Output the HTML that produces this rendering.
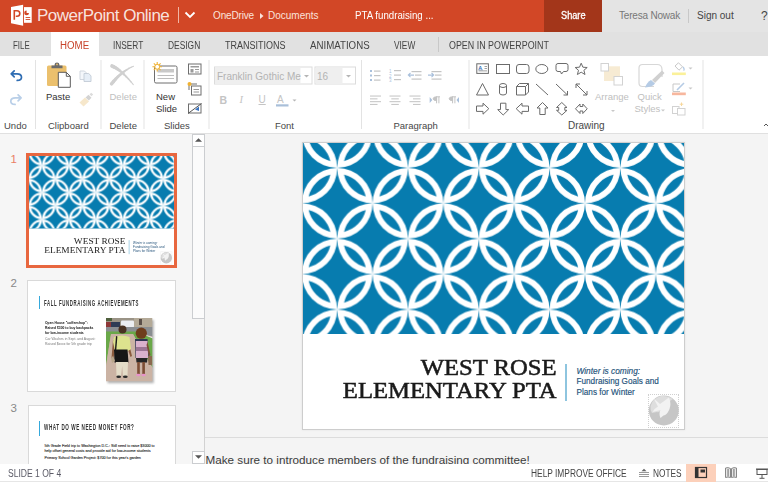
<!DOCTYPE html>
<html><head><meta charset="utf-8">
<style>
*{margin:0;padding:0;box-sizing:border-box}
html,body{width:768px;height:482px;overflow:hidden;background:#fff;font-family:"Liberation Sans",sans-serif}
div,span,svg{position:absolute}
.t{white-space:nowrap;line-height:1;transform-origin:0 0}
.tab{top:41px;font-size:10px;color:#444}
.sep{top:60px;width:1px;height:69px;background:#e3e3e3}
.lbl{top:121px;font-size:9.5px;color:#474747}
.big{font-size:9.5px;color:#444}
#th1 div{-webkit-text-stroke-width:0 !important}
</style></head><body>
<!-- title bar -->
<div style="left:0;top:0;width:768px;height:32px;background:#e4e4e4"></div>
<div style="left:0;top:0;width:544px;height:32px;background:#d24726"></div>
<div style="left:544px;top:0;width:58px;height:32px;background:#a3361a"></div>
<svg style="left:0;top:0" width="40" height="32" viewBox="0 0 40 32">
 <polygon points="11,7.1 23.1,4.7 23.1,25.7 11,23.3" fill="#fff"/>
 <path d="M14.3,19.8 V10.8 H17 Q19.8,10.8 19.8,13.6 Q19.8,16.3 17,16.3 H15.8" fill="none" stroke="#d24726" stroke-width="1.6"/>
 <rect x="24" y="7.1" width="7.7" height="15.7" fill="#fff"/>
 <path d="M26.6,10.5 A2.4,2.4 0 1 0 29,12.9 H26.6Z" fill="#d24726"/>
 <rect x="25.6" y="17" width="4.6" height="0.9" fill="#d24726"/>
 <rect x="25.6" y="19" width="4.6" height="0.9" fill="#d24726"/>
</svg>
<div class="t" style="left:37px;top:7px;font-size:17px;color:rgba(255,255,255,0.86);letter-spacing:-0.5px">PowerPoint Online</div>
<div style="left:178px;top:7px;width:1px;height:16px;background:#f0b6a6"></div>
<svg style="left:184px;top:11px" width="12" height="8" viewBox="0 0 12 8"><path d="M1.5,1.5 L6,6 L10.5,1.5" fill="none" stroke="#fff" stroke-width="1.8"/></svg>
<div class="t" style="left:213px;top:11px;font-size:10px;color:#fbe3dc;letter-spacing:-0.15px">OneDrive</div>
<svg style="left:259px;top:12px" width="6" height="8"><path d="M1,1 L4.5,4 L1,7Z" fill="#fbe3dc"/></svg>
<div class="t" style="left:268px;top:11px;font-size:10px;color:#fbe3dc">Documents</div>
<div class="t" style="left:355px;top:11px;font-size:10px;color:#fff;transform:scaleX(0.97)">PTA fundraising ...</div>
<div class="t" style="left:561px;top:11px;font-size:10px;color:#fff;-webkit-text-stroke:0.3px #fff;transform:scaleX(0.92)">Share</div>
<div class="t" style="left:619px;top:11px;font-size:10px;color:#777;letter-spacing:-0.2px">Teresa Nowak</div>
<div style="left:688px;top:9px;width:1px;height:14px;background:#c8c8c8"></div>
<div class="t" style="left:697px;top:11px;font-size:10px;color:#444">Sign out</div>
<div class="t" style="left:761px;top:10px;font-size:12px;color:#444">?</div>

<!-- tabs -->
<div style="left:0;top:32px;width:768px;height:24px;background:#e1e1e1"></div>
<div style="left:51px;top:32px;width:48px;height:24px;background:#fff"></div>
<div class="t tab" style="left:13px;transform:scaleX(0.79)">FILE</div>
<div class="t tab" style="left:60px;color:#c8432b;transform:scaleX(0.97)">HOME</div>
<div class="t tab" style="left:113px;transform:scaleX(0.83)">INSERT</div>
<div class="t tab" style="left:168px;transform:scaleX(0.84)">DESIGN</div>
<div class="t tab" style="left:225px;transform:scaleX(0.9)">TRANSITIONS</div>
<div class="t tab" style="left:310px;transform:scaleX(0.97)">ANIMATIONS</div>
<div class="t tab" style="left:393.5px;transform:scaleX(0.83)">VIEW</div>
<div style="left:438px;top:37px;width:1px;height:15px;background:#c8c8c8"></div>
<div class="t tab" style="left:449px;transform:scaleX(0.89)">OPEN IN POWERPOINT</div>

<!-- ribbon -->
<div style="left:0;top:133px;width:768px;height:1px;background:#e0e0e0"></div>
<!--RIBBON--><!-- Undo group -->
<svg style="left:0;top:56px" width="768" height="77" viewBox="0 56 768 77">
 <g fill="none" stroke-linecap="round" stroke-linejoin="round">
  <path d="M14.2,70.8 L11.2,73.8 L14.2,76.8 M11.5,73.8 H17 Q21.5,73.8 21.5,77.2 Q21.5,80.4 17.2,80.4" stroke="#2f6db3" stroke-width="1.7"/>
  <path d="M18.1,94.8 L21.1,97.8 L18.1,100.8 M20.8,97.8 H15.3 Q10.8,97.8 10.8,101.2 Q10.8,104.4 15.1,104.4" stroke="#b9cfe8" stroke-width="1.7"/>
 </g>
 <!-- separators -->
 <g fill="#e3e3e3">
  <rect x="35" y="60" width="1" height="69"/>
  <rect x="100.5" y="60" width="1" height="69"/>
  <rect x="143.5" y="60" width="1" height="69"/>
  <rect x="208.5" y="60" width="1" height="69"/>
  <rect x="361" y="60" width="1" height="69"/>
  <rect x="468.5" y="60" width="1" height="69"/>
  <rect x="702.5" y="60" width="1" height="69"/>
 </g>
 <!-- paste -->
 <rect x="47" y="65.5" width="19.5" height="20.5" rx="1.5" fill="#ebc06d"/>
 <path d="M51.5,68.2 V65.6 H54.6 V64.6 Q54.6,62.6 57,62.6 Q59.4,62.6 59.4,64.6 V65.6 H62.5 V68.2Z" fill="#6b6b6b"/><circle cx="57" cy="64.4" r="0.9" fill="#ebc06d"/>
 <path d="M58.3,72.3 H66.3 L70.3,76.3 V87.3 H58.3Z" fill="#fff" stroke="#5a5a5a" stroke-width="1"/>
 <path d="M66.3,72.3 V76.3 H70.3" fill="none" stroke="#5a5a5a" stroke-width="1"/>
 <!-- copy -->
 <path d="M80,71 H84.5 L86.5,73 V79.5 H80Z" fill="#f4f7fb" stroke="#ccd3db" stroke-width="0.9"/>
 <path d="M84,73.5 H88.7 L91,75.8 V81.5 H84Z" fill="#e6eef7" stroke="#c3ccd6" stroke-width="0.9"/>
<!-- format painter -->
 <path d="M79.5,102.5 L85,97.5 L89,101.5 L83.5,106.5Z" fill="#f6e7cb"/>
 <path d="M85.5,97.5 L88.5,94.8 L91.5,97.8 L88.8,100.5Z" fill="#d3d3d3"/>
 <path d="M89.5,94.3 L91.3,92.7 L93.2,94.6 L91.5,96.3Z" fill="#dcdcdc"/>
<!-- delete X -->
 <g fill="none"><path d="M112.00,66.00 L113.83,66.82" stroke="#d0d0d0" stroke-width="3.65" stroke-linecap="round"/><path d="M113.83,66.82 L115.73,67.86" stroke="#d0d0d0" stroke-width="3.36" stroke-linecap="round"/><path d="M115.73,67.86 L117.70,69.14" stroke="#d0d0d0" stroke-width="3.07" stroke-linecap="round"/><path d="M117.70,69.14 L119.73,70.66" stroke="#d0d0d0" stroke-width="2.79" stroke-linecap="round"/><path d="M119.73,70.66 L121.83,72.40" stroke="#d0d0d0" stroke-width="2.50" stroke-linecap="round"/><path d="M121.83,72.40 L123.99,74.38" stroke="#d0d0d0" stroke-width="2.21" stroke-linecap="round"/><path d="M123.99,74.38 L126.22,76.58" stroke="#d0d0d0" stroke-width="1.92" stroke-linecap="round"/><path d="M126.22,76.58 L128.51,79.02" stroke="#d0d0d0" stroke-width="1.62" stroke-linecap="round"/><path d="M128.51,79.02 L130.87,81.70" stroke="#d0d0d0" stroke-width="1.33" stroke-linecap="round"/><path d="M130.87,81.70 L133.30,84.60" stroke="#d0d0d0" stroke-width="1.04" stroke-linecap="round"/><path d="M111.50,83.80 L113.61,81.32" stroke="#d0d0d0" stroke-width="3.46" stroke-linecap="round"/><path d="M113.61,81.32 L115.74,79.00" stroke="#d0d0d0" stroke-width="3.19" stroke-linecap="round"/><path d="M115.74,79.00 L117.89,76.84" stroke="#d0d0d0" stroke-width="2.92" stroke-linecap="round"/><path d="M117.89,76.84 L120.06,74.84" stroke="#d0d0d0" stroke-width="2.66" stroke-linecap="round"/><path d="M120.06,74.84 L122.25,73.00" stroke="#d0d0d0" stroke-width="2.38" stroke-linecap="round"/><path d="M122.25,73.00 L124.46,71.32" stroke="#d0d0d0" stroke-width="2.11" stroke-linecap="round"/><path d="M124.46,71.32 L126.69,69.80" stroke="#d0d0d0" stroke-width="1.85" stroke-linecap="round"/><path d="M126.69,69.80 L128.94,68.44" stroke="#d0d0d0" stroke-width="1.57" stroke-linecap="round"/><path d="M128.94,68.44 L131.21,67.24" stroke="#d0d0d0" stroke-width="1.30" stroke-linecap="round"/><path d="M131.21,67.24 L133.50,66.20" stroke="#d0d0d0" stroke-width="1.04" stroke-linecap="round"/></g>
 <!-- new slide -->
 <rect x="154.5" y="66" width="22.5" height="17" rx="1.5" fill="#fff" stroke="#6e6e6e" stroke-width="1"/>
 <rect x="157.5" y="69" width="16.5" height="3.5" fill="#c9c9c9"/>
 <rect x="157.5" y="75" width="16.5" height="1" fill="#bdbdbd"/>
 <rect x="157.5" y="78" width="16.5" height="1" fill="#bdbdbd"/>
 <g stroke="#f0b233" stroke-width="1.1">
  <path d="M157.2,62 V71.6 M152.4,66.8 H162 M153.8,63.4 L160.6,70.2 M160.6,63.4 L153.8,70.2"/>
 </g>
 <circle cx="157.2" cy="66.8" r="2.4" fill="#fff" stroke="#f0b233" stroke-width="1"/>
 <!-- layout icon -->
 <rect x="188.5" y="64" width="12.5" height="10" fill="#fff" stroke="#6e6e6e" stroke-width="1"/>
 <rect x="190.5" y="66" width="8.5" height="1.5" fill="#9a9a9a"/>
 <rect x="190.5" y="69" width="3" height="3.5" fill="#9a9a9a"/>
 <rect x="195" y="69" width="4" height="1" fill="#9a9a9a"/>
 <rect x="195" y="71.5" width="4" height="1" fill="#9a9a9a"/>
 <!-- duplicate icon -->
 <rect x="191.5" y="86" width="9.5" height="9" fill="#fff" stroke="#6e6e6e" stroke-width="1"/>
 <path d="M189,90 V84 H197" fill="none" stroke="#6e6e6e" stroke-width="1"/>
 <rect x="193.5" y="89" width="5.5" height="1" fill="#9a9a9a"/>
 <rect x="193.5" y="91.5" width="5.5" height="1" fill="#9a9a9a"/>
 <circle cx="189.5" cy="84" r="2" fill="#f0b233"/>
 <!-- hide slide icon -->
 <rect x="188.5" y="104" width="12.5" height="9" fill="#fff" stroke="#6e6e6e" stroke-width="1"/>
 <path d="M188,113.5 L201.5,103.5" stroke="#555" stroke-width="1"/>
 <path d="M195,109.5 L199,106.5 L199,111Z" fill="#3a73c0"/>
 <!-- font boxes -->
 <rect x="214.5" y="67" width="97.5" height="17" fill="#fff" stroke="#dcdcdc" stroke-width="1"/>
 <rect x="215" y="67.5" width="85.5" height="16" fill="#efefef"/>
 <path d="M304,75 L306.5,77.5 L309,75Z" fill="#b5b5b5"/>
 <rect x="315" y="67" width="40.5" height="17" fill="#fff" stroke="#dcdcdc" stroke-width="1"/>
 <rect x="315.5" y="67.5" width="27" height="16" fill="#efefef"/>
 <path d="M346,75 L348.5,77.5 L351,75Z" fill="#b5b5b5"/>
 <!-- A color underline -->
 <rect x="276" y="104.3" width="12.5" height="2.2" fill="#a9bfd9"/>
 <path d="M292.5,99.5 L294.5,101.5 L296.5,99.5Z" fill="#b5b5b5"/>
</svg>
<div class="t lbl" style="left:4px">Undo</div>
<div class="t lbl" style="left:48px">Clipboard</div>
<div class="t lbl" style="left:109.5px">Delete</div>
<div class="t lbl" style="left:164px">Slides</div>
<div class="t lbl" style="left:275px">Font</div>
<div class="t lbl" style="left:393.5px">Paragraph</div>
<div class="t lbl" style="left:568px;font-size:10px">Drawing</div>
<div class="t big" style="left:46px;top:92px;color:#333">Paste</div>
<div class="t big" style="left:109.5px;top:92px;color:#c0c0c0">Delete</div>
<div class="t big" style="left:156px;top:92px;color:#333">New</div>
<div class="t big" style="left:156px;top:104px;color:#333">Slide</div>
<div class="t" style="left:217px;top:72px;font-size:10px;color:#b3b3b3">Franklin Gothic Me</div>
<div class="t" style="left:317px;top:72px;font-size:10px;color:#b3b3b3">16</div>
<div class="t" style="left:219.5px;top:95px;font-size:10.5px;color:#c4c4c4;font-weight:bold">B</div>
<div class="t" style="left:239.5px;top:95px;font-size:10.5px;color:#c4c4c4;font-family:'Liberation Serif';font-style:italic">I</div>
<div class="t" style="left:258.5px;top:94.5px;font-size:10px;color:#c4c4c4;text-decoration:underline">U</div>
<div class="t" style="left:277px;top:95px;font-size:10px;color:#c4c4c4">A</div>
<svg style="left:355px;top:56px" width="413" height="77" viewBox="355 56 413 77">
 <!-- bullets -->
 <g fill="#a9c0dc">
  <rect x="370" y="70" width="2" height="2"/><rect x="370" y="74.5" width="2" height="2"/><rect x="370" y="79" width="2" height="2"/>
 </g>
 <g fill="#c4c4c4">
  <rect x="374" y="70.5" width="6.5" height="1.2"/><rect x="374" y="75" width="6.5" height="1.2"/><rect x="374" y="79.5" width="6.5" height="1.2"/>
 </g>
 <!-- numbering -->
 <g fill="#a9c0dc" font-family="Liberation Sans" font-size="4.5">
  <text x="389" y="73">1</text><text x="389" y="77.5">2</text><text x="389" y="82">3</text>
 </g>
 <g fill="#c4c4c4">
  <rect x="394" y="70" width="7" height="1.2"/><rect x="394" y="74.5" width="7" height="1.2"/><rect x="394" y="79" width="7" height="1.2"/>
 </g>
 <!-- decrease indent -->
 <g fill="#c4c4c4">
  <rect x="411.5" y="71" width="10" height="1.2"/><rect x="415" y="74.5" width="6.5" height="1.2"/><rect x="411.5" y="78.5" width="10" height="1.2"/>
 </g>
 <path d="M414,75.1 H408.5 M410.5,73 L408.3,75.1 L410.5,77.2" fill="none" stroke="#a9c0dc" stroke-width="1.1"/>
 <!-- increase indent -->
 <g fill="#c4c4c4">
  <rect x="431.5" y="71" width="10" height="1.2"/><rect x="435" y="74.5" width="6.5" height="1.2"/><rect x="431.5" y="78.5" width="10" height="1.2"/>
 </g>
 <path d="M428,75.1 H433.5 M431.5,73 L433.7,75.1 L431.5,77.2" fill="none" stroke="#a9c0dc" stroke-width="1.1"/>
 <!-- align left/center/right -->
 <g fill="#c8c8c8">
  <rect x="370" y="95.5" width="11" height="1.1"/><rect x="370" y="98.3" width="7.5" height="1.1"/><rect x="370" y="101.1" width="11" height="1.1"/><rect x="370" y="103.9" width="7.5" height="1.1"/>
  <rect x="389.5" y="95.5" width="11" height="1.1"/><rect x="391.3" y="98.3" width="7.5" height="1.1"/><rect x="389.5" y="101.1" width="11" height="1.1"/><rect x="391.3" y="103.9" width="7.5" height="1.1"/>
  <rect x="409.5" y="95.5" width="11" height="1.1"/><rect x="413" y="98.3" width="7.5" height="1.1"/><rect x="409.5" y="101.1" width="11" height="1.1"/><rect x="413" y="103.9" width="7.5" height="1.1"/>
 </g>
 <!-- ltr / rtl -->
 <path d="M429.7,97 L432.3,100 L429.7,103Z" fill="#a9c0dc"/>
 <path d="M436.2,96.8 H440 M436.6,96.8 V103.3 M438.9,96.8 V103.3 M436.6,96.8 Q433.2,96.8 433.2,98.7 Q433.2,100.6 436.6,100.6Z" fill="#c4c4c4" stroke="#c4c4c4" stroke-width="1"/>
 <path d="M459,97 L456.5,100 L459,103Z" fill="#a9c0dc"/>
 <path d="M452.2,96.8 H456 M452.6,96.8 V103.3 M454.9,96.8 V103.3 M452.6,96.8 Q449.2,96.8 449.2,98.7 Q449.2,100.6 452.6,100.6Z" fill="#c4c4c4" stroke="#c4c4c4" stroke-width="1"/>

 <!-- drawing shapes -->
 <g fill="none" stroke="#6b6b6b" stroke-width="1">
  <rect x="476.8" y="63.8" width="11.6" height="9.6"/>
  <rect x="496.5" y="64.5" width="13" height="9"/>
  <rect x="516.5" y="64.5" width="12.5" height="9" rx="2.5"/>
  <ellipse cx="541.8" cy="69" rx="6" ry="4.5"/>
  <path d="M558,63.5 H566 Q568,63.5 568,65.5 V69.5 Q568,71.5 566,71.5 H563.5 L561.5,74 L560.5,71.5 H558 Q556,71.5 556,69.5 V65.5 Q556,63.5 558,63.5Z"/>
  <path d="M581.2,63.2 L582.9,67.2 L587.2,67.5 L583.9,70.3 L585,74.5 L581.2,72.2 L577.4,74.5 L578.5,70.3 L575.2,67.5 L579.5,67.2Z"/>
  <path d="M482.5,83.5 L488.5,95 H476.5Z"/>
  <path d="M499.5,85.5 V93 Q499.5,95 503,95 Q506.5,95 506.5,93 V85.5 M499.5,85.5 Q499.5,83.5 503,83.5 Q506.5,83.5 506.5,85.5 Q506.5,87.5 503,87.5 Q499.5,87.5 499.5,85.5"/>
  <path d="M516.5,86.5 H525.5 V95 H516.5Z M516.5,86.5 L519.5,83.5 H528.5 V92 L525.5,95 M525.5,86.5 L528.5,83.5"/>
  <path d="M536,84 L548,95"/>
  <path d="M556,84 L567.5,95 M567.5,91 V95 H563.5"/>
  <path d="M576,84 L587,95 M576,88 V84 H580 M587,91 V95 H583"/>
  <!-- arrows -->
  <path d="M476.5,106 H483 V103.2 L488.8,108.7 L483,114.2 V111.4 H476.5Z"/>
  <path d="M500.5,103.2 V109.6 H497.7 L503.2,115 L508.7,109.6 H505.9 V103.2Z"/>
  <path d="M528.5,106 H522 V103.2 L516.2,108.7 L522,114.2 V111.4 H528.5Z"/>
  <path d="M539.8,114.5 V108 H537 L542.5,102.5 L548,108 H545.2 V114.5Z"/>
  <path d="M556.5,107.5 L561.8,102.5 L567,107.5 H564.8 V110.3 H567 L561.8,115 L556.5,110.3 H558.7 V107.5Z"/>
  <path d="M575.5,108.8 L580,104 V106.5 H582.8 V104 L587.2,108.8 L582.8,113.5 V111 H580 V113.5Z"/>
 </g>
 <!-- text box lines -->
 <text x="478.3" y="69.6" font-family="Liberation Sans" font-size="5.5" font-weight="bold" fill="#2f6db3">A</text><rect x="478.5" y="69.5" width="4.5" height="0.9" fill="#9db6d6"/>
 <g fill="#8a8a8a"><rect x="484.5" y="66" width="2.5" height="0.8"/><rect x="484.5" y="68" width="2.5" height="0.8"/><rect x="478.5" y="70.5" width="8.5" height="0.8"/></g>
 <!-- arrange -->
 <rect x="604" y="66.3" width="16" height="14.7" fill="#f7ebd3"/>
 <rect x="601" y="63.5" width="7.5" height="7.5" fill="#fff" stroke="#d2d2d2" stroke-width="1"/>
 <rect x="614" y="76.5" width="8.5" height="8.5" fill="#fff" stroke="#d2d2d2" stroke-width="1"/>
 <path d="M611,110 L613,112 L615,110Z" fill="#c8c8c8"/>
 <!-- quick styles -->
 <path d="M642.5,64.5 H657 Q662,64.5 662,69.5 V77 M654,86.5 H642.5 Q639,86.5 639,83 V68 Q639,64.5 642.5,64.5" fill="none" stroke="#d7d7d7" stroke-width="1.2"/>
 <path d="M645,87.5 Q647,82 651,80 L655,83.5 Q653,87 645,87.5Z" fill="#b5cbe5"/>
 <path d="M652,80 L662,70.5 L664.5,73 L655,83Z" fill="#d0d0d0"/>
 <path d="M661,109.5 L663,111.5 L665,109.5Z" fill="#c8c8c8"/>
 <!-- shape fill -->
 <path d="M675,66 L678.5,62.8 L682.5,66.8 L679,70.2 Z" fill="#fff" stroke="#c8c8c8" stroke-width="1"/>
 <path d="M683,67 Q685,69.5 683.5,70.5" fill="none" stroke="#b5cbe5" stroke-width="1.3"/>
 <rect x="672" y="72.5" width="13.8" height="2.6" fill="#fbf19a"/>
 <path d="M688.5,67.5 L690.5,69.5 L692.5,67.5Z" fill="#c8c8c8"/>
 <!-- shape outline -->
 <path d="M680,84 H673 V91.5 H680" fill="none" stroke="#c8c8c8" stroke-width="1"/>
 <path d="M677,90 L684,83" stroke="#b5cbe5" stroke-width="1.6"/>
 <rect x="672" y="92.5" width="13.8" height="2.7" fill="#f7b79e"/>
 <path d="M688.5,87.5 L690.5,89.5 L692.5,87.5Z" fill="#c8c8c8"/>
 <!-- effects -->
 <rect x="672.5" y="106.5" width="6.5" height="7" fill="#fff" stroke="#d2d2d2" stroke-width="1"/>
 <rect x="677.5" y="108.5" width="7.5" height="6.5" fill="#fff" stroke="#d2d2d2" stroke-width="1"/>
 <path d="M681.5,102.5 V106 M679.7,104.2 H683.3" stroke="#f7d79b" stroke-width="1"/>
 <!-- collapse -->
 <path d="M764,126 L766,124 L768,126" fill="none" stroke="#555" stroke-width="1"/>
</svg>
<div class="t big" style="left:595px;top:92px;color:#c0c0c0">Arrange</div>
<div class="t big" style="left:637.5px;top:92px;color:#c0c0c0">Quick</div>
<div class="t big" style="left:634.5px;top:104px;color:#c0c0c0">Styles</div>
<!--/RIBBON-->

<!-- content -->
<div style="left:0;top:134px;width:768px;height:330px;background:#f6f6f6"></div>
<!--CONTENT--><div id="mainbg" style="left:205px;top:134px;width:563px;height:330px;background:#f4f4f4"></div>
<!-- left panel numbers -->
<div class="t" style="left:10.5px;top:153.5px;font-size:11.5px;color:#ea7f63">1</div>
<div class="t" style="left:10.5px;top:278px;font-size:11.5px;color:#888">2</div>
<div class="t" style="left:10.5px;top:403px;font-size:11.5px;color:#888">3</div>
<!-- thumb 1 -->
<div style="left:26px;top:153px;width:151px;height:114.5px;border:3px solid #e8673f;background:#fff"></div>
<div id="th1" style="left:29px;top:156px;width:381px;height:286px;transform:scale(0.3806);transform-origin:0 0;overflow:hidden"><svg style="left:0;top:0" width="381" height="191" viewBox="0 0 381 191">
 <defs>
  <pattern id="pat1" patternUnits="userSpaceOnUse" x="-1.2" y="24.9" width="70.8" height="70.8">
   <path fill="#fff" fill-rule="evenodd" d="M35.40,0.00 A35.40,35.40 0 0 1 0.00,35.40 A35.40,35.40 0 0 1 35.40,0.00ZM28.60,6.80 A29.40,29.40 0 0 1 6.80,28.60 A29.40,29.40 0 0 1 28.60,6.80ZM70.80,35.40 A35.40,35.40 0 0 1 35.40,0.00 A35.40,35.40 0 0 1 70.80,35.40ZM64.00,28.60 A29.40,29.40 0 0 1 42.20,6.80 A29.40,29.40 0 0 1 64.00,28.60ZM0.00,35.40 A35.40,35.40 0 0 1 35.40,70.80 A35.40,35.40 0 0 1 0.00,35.40ZM6.80,42.20 A29.40,29.40 0 0 1 28.60,64.00 A29.40,29.40 0 0 1 6.80,42.20ZM35.40,70.80 A35.40,35.40 0 0 1 70.80,35.40 A35.40,35.40 0 0 1 35.40,70.80ZM42.20,64.00 A29.40,29.40 0 0 1 64.00,42.20 A29.40,29.40 0 0 1 42.20,64.00Z"/>
  </pattern>
 </defs>
 <rect width="381" height="191" fill="#077caf"/>
 <rect width="381" height="191" fill="url(#pat1)"/>
</svg>
<div class="t" style="right:127px;top:213px;font-size:23.5px;color:#1a1a1a;font-family:'Liberation Serif';text-align:right;line-height:23px;transform-origin:100% 0;transform:scaleX(1.05);-webkit-text-stroke:0.55px #1a1a1a">WEST ROSE<br>ELEMENTARY PTA</div>
<div style="left:262px;top:220.5px;width:2px;height:37.5px;background:#8ec5df"></div>
<div class="t" style="left:273.5px;top:223px;font-size:8.3px;color:#24527a;font-style:italic;line-height:11px;-webkit-text-stroke:0.15px #24527a">Winter is coming:</div>
<div class="t" style="left:273.5px;top:234px;font-size:8.2px;color:#24527a;line-height:10.7px;white-space:pre;-webkit-text-stroke:0.15px #24527a">Fundraising Goals and
Plans for Winter</div>
<div style="left:345px;top:250.5px;width:31px;height:34px;border:1px dotted #d0d0d0"></div>
<svg style="left:345px;top:250.5px" width="31" height="33" viewBox="0 0 31 33">
 <circle cx="15.8" cy="16.5" r="15" fill="#c6c6c6"/>
 <path d="M2.5,12 Q5,4 13,2 Q20,1.5 25,5 L19,9 Q15,11 14,15 Q12,19 9,18 L4,19 Q2,16 2.5,12Z" fill="#dedede"/>
 <path d="M6,5 Q9,7 12,10 L21,3.5 Q23.5,10 21.5,15 Q19,21 15.5,21.5 L12.5,24 Q10.5,19.5 12.5,16 L4.5,18 Q7,14 10,12.5 Q8,9 6,5Z" fill="#f2f2f2"/>
</svg>
</div>
<!-- thumb 2 -->
<div style="left:27px;top:279.5px;width:149px;height:112px;border:1px solid #d9d9d9;background:#fff;overflow:hidden">
 <div style="left:10.5px;top:15px;width:1.5px;height:13.5px;background:#35a9dc"></div>
 <div class="t" style="left:15.5px;top:18px;font-size:8.7px;color:#333;font-weight:bold;transform:scaleX(0.5);letter-spacing:1.2px">FALL FUNDRAISING ACHIEVEMENTS</div>
 <div class="t" style="left:16.5px;top:39px;font-size:4.2px;color:#111;font-weight:bold;line-height:5px;white-space:pre;transform:scaleX(0.8)">Open House "coffeeshop":
Raised $300 to buy backpacks
for low-income students</div>
 <div class="t" style="left:16.5px;top:55.5px;font-size:4.3px;color:#777;line-height:5px;white-space:pre;transform:scaleX(0.8)">Car Washes in Sept. and August:
Raised $xxxx for 5th grade trip</div>
 <svg style="left:78px;top:37px" width="54" height="70" viewBox="0 0 54 70">
  <defs><filter id="sh" x="-20%" y="-20%" width="140%" height="140%"><feGaussianBlur stdDeviation="1.3"/></filter>
  <filter id="bl" x="-5%" y="-5%" width="110%" height="110%"><feGaussianBlur stdDeviation="0.45"/></filter>
  <clipPath id="pc"><rect x="0" y="0" width="46.3" height="63.2"/></clipPath></defs>
  <rect x="1.5" y="2" width="46.3" height="63.2" fill="#777" opacity="0.55" filter="url(#sh)"/>
  <g clip-path="url(#pc)"><g filter="url(#bl)">
   <rect x="-2" y="-2" width="52" height="68" fill="#c4ab9c"/>
   <rect x="-2" y="-2" width="52" height="12" fill="#9a9386"/>
   <rect x="-2" y="-2" width="8" height="5" fill="#50603c"/>
   <rect x="28" y="-1" width="19" height="10" fill="#b4aa98"/>
   <rect x="33" y="1" width="3" height="6" fill="#5a5048"/>
   <rect x="0" y="4" width="6" height="5" fill="#8e3838"/>
   <rect x="5" y="4" width="9" height="6" fill="#2d3a55"/>
   <rect x="15" y="2.5" width="13" height="7" rx="1" fill="#eceef2"/>
   <path d="M-2,9 H48 V19 L38,16 H-2Z" fill="#8a8e92"/>
   <path d="M36,16 L48,19.5 V21.5 L36,17.5Z" fill="#e8e8e8"/>
   <path d="M-2,13.5 H30 L48,21 V52 L38,36 L27,16 H5 L0,48 H-2Z" fill="#6aa848"/>
   <path d="M5,16 H27 L38,36 L48,52 V66 H-2 V48 L0,48Z" fill="#cbb3a4"/>
   <!-- boy -->
   <path d="M7,22 L5.5,40 L7.5,41 L9.5,24Z" fill="#8a5a3e"/>
   <path d="M22,22 L26,38 L24.5,39 L20,26Z" fill="#8a5a3e"/>
   <circle cx="16.5" cy="11.5" r="4" fill="#4a3020"/>
   <path d="M8,19 Q16,16 23.5,19 L25,31 L22,33 H9 L7,24Z" fill="#dde38e"/>
   <path d="M10,18 L8.8,33 L10.2,33 L11.4,18.5Z" fill="#1a1a1a"/>
   <path d="M8,31.5 H21.5 L22.5,44.5 H8.5Z" rx="1" fill="#161616"/>
   <path d="M10,44 H22 L21.5,58 H17 L16.2,48 L15,58 H10.5Z" fill="#e4dcc8"/>
   <ellipse cx="12.7" cy="58.8" rx="2.4" ry="1.2" fill="#2a2a2a"/>
   <ellipse cx="19.3" cy="58.8" rx="2.4" ry="1.2" fill="#2a2a2a"/>
   <path d="M5,40 L7,38 L9,43 L6,45Z" fill="#b8a58a"/>
   <!-- girl -->
   <circle cx="35.3" cy="15.2" r="5.6" fill="#6e3d1e"/>
   <path d="M29,21 H41.5 L43,40 H29.5Z" fill="#2f3552"/>
   <path d="M29.8,23 H41.5 L42.2,40 H30Z" fill="#d9b1cd"/>
   <path d="M30,29 H42 V33 H30Z" fill="#9b7495"/>
   <path d="M30,40 H41.5 L41,44.5 H30.5Z" fill="#252525"/>
   <rect x="31.2" y="44" width="2.6" height="12.5" fill="#7d4e34"/>
   <rect x="36.3" y="44" width="2.6" height="12.5" fill="#7d4e34"/>
   <ellipse cx="32.3" cy="57" rx="2.3" ry="1.3" fill="#e793c9"/>
   <ellipse cx="37.6" cy="57" rx="2.3" ry="1.3" fill="#e793c9"/>
   <path d="M41.5,24 L44.5,37 L43,38 L40.5,27Z" fill="#7d4e34"/>
   <path d="M42,38 H46 L46.5,47 H42.5Z" fill="#8b6a50"/>
  </g></g>
 </svg>
</div>
<!-- thumb 3 -->
<div style="left:27.5px;top:404.5px;width:148px;height:70px;border:1px solid #d9d9d9;background:#fff;overflow:hidden">
 <div style="left:10px;top:15px;width:1.5px;height:15px;background:#35a9dc"></div>
 <div class="t" style="left:15px;top:17px;font-size:9.2px;color:#333;font-weight:bold;transform:scaleX(0.5);letter-spacing:1.1px">WHAT DO WE NEED MONEY FOR?</div>
 <div class="t" style="left:16px;top:38.5px;font-size:3.7px;color:#222;line-height:5px;white-space:pre;-webkit-text-stroke:0.1px #222">5th Grade Field trip to Washington D.C.: Still need to raise $3000 to
help offset general costs and provide aid for low-income students</div>
 <div class="t" style="left:16px;top:50px;font-size:3.7px;color:#222;line-height:5px;white-space:pre;-webkit-text-stroke:0.1px #222">Primary School Garden Project: $700 for this year's garden</div>
</div>
<!-- scrollbar -->
<div style="left:203.5px;top:134px;width:1.2px;height:329px;background:#d2d2d2"></div>
<div style="left:192px;top:134px;width:13px;height:13.5px;background:#fff;border:1.4px solid #cbcdd0"></div>
<svg style="left:194px;top:137px" width="9" height="6"><path d="M1,4.8 L4.5,1.3 L8,4.8Z" fill="#555"/></svg>
<div style="left:192px;top:146px;width:13px;height:172.8px;background:#fbfbfb;border:1.4px solid #cbcdd0"></div>
<div style="left:192px;top:450.5px;width:13px;height:13px;background:#fff;border:1.4px solid #cbcdd0"></div>
<svg style="left:194px;top:454px" width="9" height="6"><path d="M1,1.2 L4.5,4.7 L8,1.2Z" fill="#555"/></svg>
<!-- main slide -->
<div style="left:302px;top:142px;width:383px;height:288px;border:1px solid #cdcdcd;background:#fff;box-shadow:0 0 2px rgba(0,0,0,0.08)"></div>
<div id="main" style="left:303px;top:143px;width:381px;height:286px;overflow:hidden"><svg style="left:0;top:0" width="381" height="191" viewBox="0 0 381 191">
 <defs>
  <pattern id="pat2" patternUnits="userSpaceOnUse" x="-1.2" y="24.9" width="70.8" height="70.8">
   <path fill="#fff" fill-rule="evenodd" d="M35.40,0.00 A35.40,35.40 0 0 1 0.00,35.40 A35.40,35.40 0 0 1 35.40,0.00ZM28.60,6.80 A29.40,29.40 0 0 1 6.80,28.60 A29.40,29.40 0 0 1 28.60,6.80ZM70.80,35.40 A35.40,35.40 0 0 1 35.40,0.00 A35.40,35.40 0 0 1 70.80,35.40ZM64.00,28.60 A29.40,29.40 0 0 1 42.20,6.80 A29.40,29.40 0 0 1 64.00,28.60ZM0.00,35.40 A35.40,35.40 0 0 1 35.40,70.80 A35.40,35.40 0 0 1 0.00,35.40ZM6.80,42.20 A29.40,29.40 0 0 1 28.60,64.00 A29.40,29.40 0 0 1 6.80,42.20ZM35.40,70.80 A35.40,35.40 0 0 1 70.80,35.40 A35.40,35.40 0 0 1 35.40,70.80ZM42.20,64.00 A29.40,29.40 0 0 1 64.00,42.20 A29.40,29.40 0 0 1 42.20,64.00Z"/>
  </pattern>
 </defs>
 <rect width="381" height="191" fill="#077caf"/>
 <rect width="381" height="191" fill="url(#pat2)"/>
</svg>
<div class="t" style="right:127px;top:213px;font-size:23.5px;color:#1a1a1a;font-family:'Liberation Serif';text-align:right;line-height:23px;transform-origin:100% 0;transform:scaleX(1.05);-webkit-text-stroke:0.55px #1a1a1a">WEST ROSE<br>ELEMENTARY PTA</div>
<div style="left:262px;top:220.5px;width:2px;height:37.5px;background:#8ec5df"></div>
<div class="t" style="left:273.5px;top:223px;font-size:8.3px;color:#24527a;font-style:italic;line-height:11px;-webkit-text-stroke:0.15px #24527a">Winter is coming:</div>
<div class="t" style="left:273.5px;top:234px;font-size:8.2px;color:#24527a;line-height:10.7px;white-space:pre;-webkit-text-stroke:0.15px #24527a">Fundraising Goals and
Plans for Winter</div>
<div style="left:345px;top:250.5px;width:31px;height:34px;border:1px dotted #d0d0d0"></div>
<svg style="left:345px;top:250.5px" width="31" height="33" viewBox="0 0 31 33">
 <circle cx="15.8" cy="16.5" r="15" fill="#c6c6c6"/>
 <path d="M2.5,12 Q5,4 13,2 Q20,1.5 25,5 L19,9 Q15,11 14,15 Q12,19 9,18 L4,19 Q2,16 2.5,12Z" fill="#dedede"/>
 <path d="M6,5 Q9,7 12,10 L21,3.5 Q23.5,10 21.5,15 Q19,21 15.5,21.5 L12.5,24 Q10.5,19.5 12.5,16 L4.5,18 Q7,14 10,12.5 Q8,9 6,5Z" fill="#f2f2f2"/>
</svg>
</div>
<!-- notes -->
<div style="left:205px;top:436.5px;width:563px;height:1px;background:#dcdcdc"></div>
<div style="left:205px;top:452px;width:563px;height:12px;overflow:hidden">
 <div class="t" style="left:0.5px;top:1.5px;font-size:11.7px;color:#3c3c3c">Make sure to introduce members of the fundraising committee!</div>
</div>
<!--/CONTENT-->

<!-- status -->
<div style="left:0;top:464px;width:768px;height:18px;background:#fff"></div>
<!--STATUS--><div style="left:0;top:481px;width:768px;height:1px;background:#e6e6e6"></div>
<div class="t" style="left:8px;top:469px;font-size:10px;color:#5a5a66;transform:scaleX(0.855)">SLIDE 1 OF 4</div>
<div class="t" style="left:531px;top:469px;font-size:10px;color:#444;transform:scaleX(0.837)">HELP IMPROVE OFFICE</div>
<svg style="left:638px;top:467px" width="12" height="11" viewBox="0 0 12 11">
 <path d="M3.5,4.2 L6,1.7 L8.5,4.2Z" fill="#666"/>
 <rect x="1" y="5" width="10" height="1" fill="#999"/><rect x="1" y="7" width="10" height="1" fill="#999"/><rect x="1" y="9" width="10" height="1" fill="#999"/>
</svg>
<div class="t" style="left:653px;top:469px;font-size:10px;color:#444;transform:scaleX(0.83)">NOTES</div>
<div style="left:686px;top:464px;width:30px;height:18px;background:#fcd0ba"></div>
<svg style="left:686px;top:464px" width="82" height="18" viewBox="686 464 82 18">
 <rect x="695.5" y="467.5" width="11" height="10" fill="none" stroke="#333" stroke-width="1.2"/>
 <rect x="695.5" y="467.5" width="3" height="10" fill="#333"/>
 <rect x="700.5" y="469.5" width="4.5" height="3" fill="#333"/>
 <path d="M725.5,468 Q728,467 730.5,468.5 V477.5 Q728,476.5 725.5,477.5Z M736.5,468 Q734,467 731.5,468.5 V477.5 Q734,476.5 736.5,477.5Z" fill="#e8e8e8" stroke="#888" stroke-width="1"/>
 <rect x="727.3" y="469" width="1.6" height="7.5" fill="#999"/><rect x="733.1" y="469" width="1.6" height="7.5" fill="#999"/>
 <rect x="756" y="468.5" width="12" height="1.3" fill="#555"/>
 <rect x="757" y="469.5" width="10" height="5" fill="#fff" stroke="#555" stroke-width="1"/>
 <path d="M762,474.5 V478 M759.5,478.3 H764.5" stroke="#555" stroke-width="1"/>
</svg>
<!--/STATUS-->
</body></html>
